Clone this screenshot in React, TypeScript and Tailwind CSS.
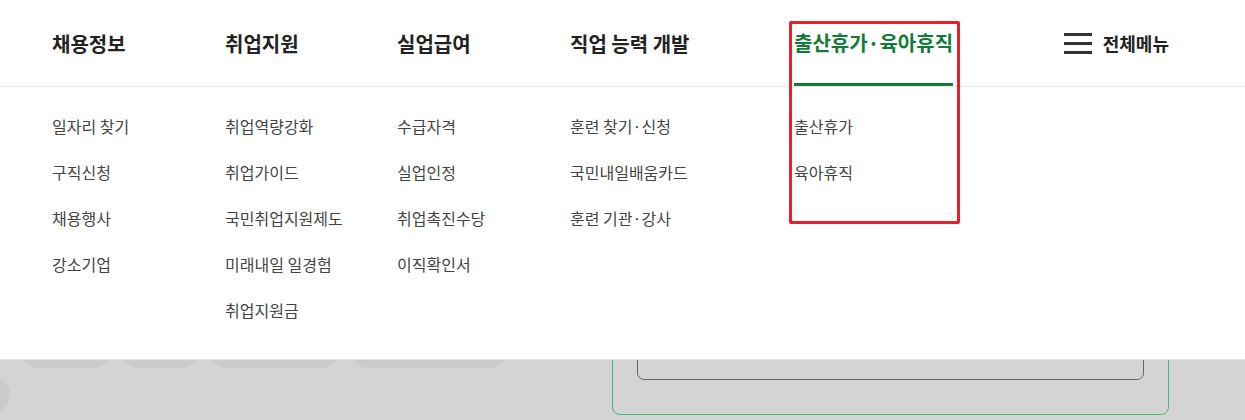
const menus = [
  { title: "채용정보", width: "w-[173px]", items: ["일자리 찾기", "구직신청", "채용행사", "강소기업"] },
  { title: "취업지원", width: "w-[172px]", items: ["취업역량강화", "취업가이드", "국민취업지원제도", "미래내일 일경험", "취업지원금"] },
  { title: "실업급여", width: "w-[173px]", items: ["수급자격", "실업인정", "취업촉진수당", "이직확인서"] },
  { title: "직업 능력 개발", width: "w-[224px]", items: ["훈련 찾기·신청", "국민내일배움카드", "훈련 기관·강사"] },
  { title: "출산휴가·육아휴직", width: "w-[180px]", items: ["출산휴가", "육아휴직"], active: true },
];

const pills = ["w-[88px]", "w-[75px]", "w-[128px]", "w-[155px]"];

export default function App() {
  return (
    <div
      className="relative h-[420px] w-[1245px] overflow-hidden bg-[#d4d4d4]"
      style={{ fontFamily: '"Noto Sans CJK KR", "Noto Sans", sans-serif' }}
    >
      {/* 상단 메뉴 + 드롭다운 */}
      <div className="relative z-10 border-b border-[#e2e2e2] bg-white">
        <div className="flex h-[87px] items-stretch border-b border-[#e8e8e8] pl-[52px] pr-[76px]">
          {menus.map((m) => (
            <div key={m.title} className={`${m.width} flex shrink-0 items-stretch`}>
              <span
                className={`inline-flex items-center pt-[2px] text-[20px] font-bold ${
                  m.active ? "border-b-[3px] border-[#137a3a] text-[#137a3a]" : "text-[#222]"
                }`}
              >
                {m.title}
              </span>
            </div>
          ))}
          <div className="ml-auto flex items-center gap-[11px]">
            <span className="flex w-[28px] flex-col gap-[6px]">
              <span className="h-[3px] bg-[#333]" />
              <span className="h-[3px] bg-[#333]" />
              <span className="h-[3px] bg-[#333]" />
            </span>
            <span className="text-[18px] font-bold text-[#222]">전체메뉴</span>
          </div>
        </div>
        <div className="flex h-[272px] pl-[52px] pt-[16px]">
          {menus.map((m) => (
            <ul key={m.title} className={`${m.width} shrink-0`}>
              {m.items.map((it) => (
                <li key={it} className="text-[16px] leading-[46px] text-[#444]">
                  {it}
                </li>
              ))}
            </ul>
          ))}
        </div>
      </div>

      {/* 가려진 배경 페이지 */}
      <div className="flex items-start">
        <div className="relative w-[612px] shrink-0">
          <div className="-mt-[24px] flex gap-[13px] pl-[22px]">
            {pills.map((w, i) => (
              <div key={i} className={`${w} h-[32px] rounded-full bg-[#cbcbcb]`} />
            ))}
          </div>
          <div className="-ml-[22px] mt-[10px] h-[34px] w-[32px] rounded-full bg-[#cbcbcb]" />
        </div>
        <div className="-mt-[40px] h-[95px] w-[557px] shrink-0 rounded-[8px] border border-[#4cb87a] px-[24px]">
          <div className="h-[59px] rounded-[7px] border border-[#666]" />
        </div>
      </div>

      {/* 강조 표시 */}
      <div className="pointer-events-none absolute left-[789px] top-[21px] z-20 h-[203px] w-[171px] rounded-[2px] border-[3px] border-[#e8202a]" />
    </div>
  );
}
